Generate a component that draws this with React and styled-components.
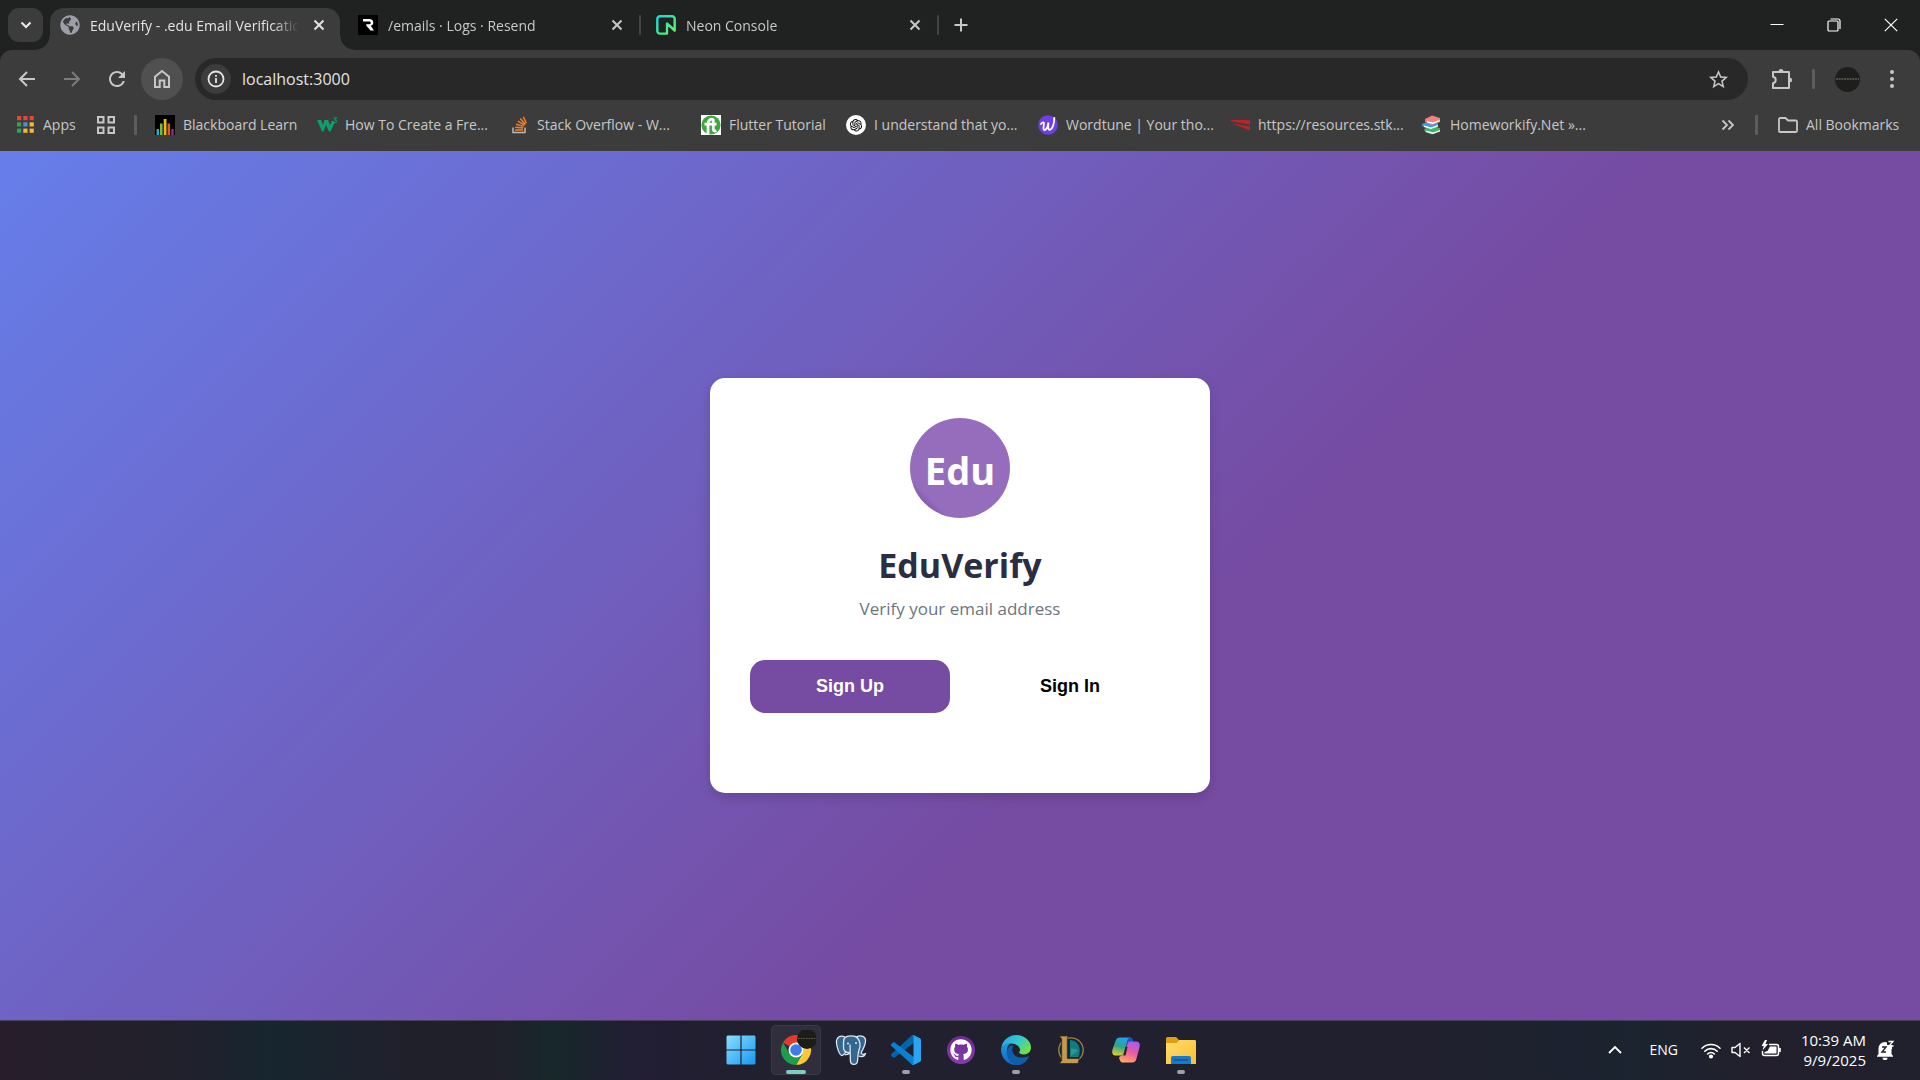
import React from 'react';
import styled, { createGlobalStyle, css } from 'styled-components';
import { FaGithub } from 'react-icons/fa6';
import { AiOutlineOpenAI } from 'react-icons/ai';
import { FaGlobeAmericas } from 'react-icons/fa';
import { MdStarOutline, MdRefresh } from 'react-icons/md';

const ui = '"Open Sans", "Noto Sans", sans-serif';

const GlobalStyle = createGlobalStyle`
  *, *::before, *::after { box-sizing: border-box; }
  body { margin: 0; background: #202121; font-family: ${ui}; }
  button { border: 0; padding: 0; background: none; color: inherit; font: inherit; }
  a { color: inherit; text-decoration: none; }
  svg { display: block; flex: none; }
`;

const Desktop = styled.div`
  display: flex;
  flex-direction: column;
  min-height: 100vh;
`;

/* ---------- Browser frame ---------- */

const TabStrip = styled.header`
  display: flex;
  align-items: flex-end;
  height: 50px;
  padding: 0 1px 0 8px;
  background: #202121;
  color: #c7c8c7;
`;

const TabSearch = styled.button`
  display: grid;
  place-items: center;
  width: 35px;
  height: 34px;
  margin: 0 2px 8px 0;
  border-radius: 11px;
  background: #3c3c3c;
  color: #e6e6e6;
`;

const Tabs = styled.nav`
  display: flex;
`;

const Tab = styled.div`
  position: relative;
  display: flex;
  align-items: center;
  gap: 10px;
  width: 298px;
  height: 42px;
  padding: 0 14px 8px 15px;
  ${(p) =>
    p.$active
      ? css`
          color: #e3e3e3;
          &::before {
            content: '';
            position: absolute;
            inset: 0 3px 0 5px;
            border-radius: 14px 14px 0 0;
            background: #3c3c3c;
          }
          &::after {
            content: '';
            position: absolute;
            bottom: 0;
            left: -9px;
            right: -11px;
            height: 14px;
            background: radial-gradient(circle at 0 0, transparent 13px, #3c3c3c 14px) left / 14px 14px no-repeat,
              radial-gradient(circle at 100% 0, transparent 13px, #3c3c3c 14px) right / 14px 14px no-repeat;
          }
          & > * {
            position: relative;
            z-index: 1;
          }
        `
      : css`
          &::after {
            content: '';
            position: absolute;
            top: 7px;
            right: 0;
            width: 2px;
            height: 20px;
            border-radius: 1px;
            background: #434444;
          }
        `}
`;

const TabTitle = styled.a`
  flex: 1;
  overflow: hidden;
  padding-top: 2px;
  white-space: nowrap;
  font-size: 14px;
  line-height: 20px;
  mask-image: linear-gradient(to right, #000 calc(100% - 26px), transparent);
`;

const TabClose = styled.button`
  display: grid;
  place-items: center;
  width: 20px;
  height: 20px;
`;

const NewTab = styled.button`
  display: grid;
  place-items: center;
  width: 34px;
  height: 34px;
  margin: 0 0 8px 5px;
`;

const WindowControls = styled.div`
  display: flex;
  align-self: flex-start;
  margin-left: auto;
  color: #fff;
`;

const WindowButton = styled.button`
  display: grid;
  place-items: center;
  width: 57px;
  height: 49px;
`;

const ToolbarBack = styled.div`
  background: #202121;
`;

const Toolbar = styled.div`
  display: flex;
  align-items: center;
  gap: 3px;
  height: 50px;
  padding: 8px 7px 0 6px;
  background: #3c3c3c;
  border-radius: 12px 12px 0 0;
  color: #c7c7c7;
`;

const ToolButton = styled.button`
  display: grid;
  place-items: center;
  width: 42px;
  height: 42px;
  border-radius: 50%;
  background: ${(p) => (p.$lit ? '#505050' : 'transparent')};
  color: ${(p) => (p.$dim ? '#7c7c7c' : 'inherit')};
`;

const AddressBar = styled.div`
  display: flex;
  align-items: center;
  flex: 1;
  gap: 11px;
  height: 42px;
  margin: 0 10px 0 9px;
  padding: 0 9px 0 6px;
  border-radius: 21px;
  background: #282828;
`;

const SiteInfo = styled.button`
  display: grid;
  place-items: center;
  width: 30px;
  height: 30px;
  border-radius: 50%;
  background: #3c3c3c;
  color: #e3e3e3;
`;

const Address = styled.input`
  flex: 1;
  min-width: 0;
  border: 0;
  padding: 0;
  outline: 0;
  background: none;
  color: #e3e3e3;
  font: 16px/24px ${ui};
`;

const Divider = styled.span`
  width: 3px;
  height: 20px;
  border-radius: 1px;
  background: #5d5d5d;
`;

const ToolDivider = styled(Divider)`
  margin: 0 8px 0 6px;
`;

const Avatar = styled.span`
  display: grid;
  place-items: center;
  width: 25px;
  height: 25px;
  border-radius: 50%;
  background: #1e1e1d;
`;

const Bookmarks = styled.nav`
  display: flex;
  align-items: center;
  gap: 18px;
  height: 51px;
  padding: 0 18px 1px 15px;
  background: #3c3c3c;
  color: #c7c7c7;
  font-size: 14px;
  line-height: 20px;
  white-space: nowrap;
`;

const Bookmark = styled.a`
  display: flex;
  align-items: center;
  gap: 8px;
`;

const BookmarkLabel = styled.span`
  width: ${(p) => p.$width}px;
`;

const BookmarksEnd = styled.div`
  display: flex;
  align-items: center;
  gap: 20px;
  margin-left: auto;
`;

/* ---------- Page ---------- */

const Page = styled.main`
  display: grid;
  place-items: center;
  flex: 1;
  padding: 20px;
  background: linear-gradient(135deg, #667eea 0%, #764ba2 60%);
`;

const Card = styled.section`
  display: flex;
  flex-direction: column;
  align-items: center;
  width: 100%;
  max-width: 500px;
  padding: 40px 40px 80px;
  border-radius: 15px;
  background: #fff;
  box-shadow: 0 4px 12px rgba(0, 0, 0, 0.15);
  text-align: center;
`;

const Logo = styled.div`
  display: grid;
  place-items: center;
  width: 100px;
  height: 100px;
  padding-top: 4px;
  border-radius: 50%;
  background: linear-gradient(45deg, #764ba2 10%, #966dbd 20%);
  color: #fff;
  font-size: 38px;
  font-weight: 700;
  line-height: 48px;
`;

const Title = styled.h1`
  margin: 23px 0 8px;
  color: #2b2d42;
  font-size: 34px;
  font-weight: 700;
  line-height: 48px;
`;

const Subtitle = styled.p`
  margin: 0 0 39px;
  color: #6c757d;
  font-size: 17px;
  line-height: 24px;
`;

const Actions = styled.div`
  display: flex;
  gap: 20px;
  width: 100%;
`;

const ActionButton = styled.button`
  flex: 1;
  height: 53px;
  border-radius: 15px;
  background: ${(p) => (p.$primary ? '#764ba2' : 'transparent')};
  color: ${(p) => (p.$primary ? '#fff' : '#000')};
  font: 700 18px/21px "Liberation Sans", Arial, sans-serif;
`;

/* ---------- Taskbar ---------- */

const Taskbar = styled.footer`
  display: grid;
  grid-template-columns: 1fr auto 1fr;
  align-items: center;
  height: 60px;
  padding-bottom: 1px;
  border-top: 1px solid #46405a;
  background: linear-gradient(
    to right,
    #271d2b 0%,
    #20212c 10%,
    #172630 14%,
    #20202b 21%,
    #20202b 26%,
    #17282b 29%,
    #221d33 33%,
    #20202e 40%,
    #20202e 75%,
    #1b2430 85%,
    #231f2c 92%,
    #20202c 100%
  );
  color: #fff;
`;

const Apps = styled.nav`
  grid-column: 2;
  display: flex;
  gap: 5px;
  padding-left: 1px;
`;

const AppButton = styled.button`
  position: relative;
  display: grid;
  place-items: center;
  width: 50px;
  height: 50px;
  border-radius: 5px;
  background: ${(p) => (p.$state === 'active' ? '#302e3c' : 'transparent')};
  box-shadow: ${(p) => (p.$state === 'active' ? 'inset 0 0 0 1px #3b3947' : 'none')};
  ${(p) =>
    p.$state &&
    css`
      &::after {
        content: '';
        position: absolute;
        bottom: 1px;
        left: 50%;
        width: ${p.$state === 'active' ? 20 : 8}px;
        height: 4px;
        border-radius: 2px;
        background: ${p.$state === 'active' ? '#7fcbc4' : '#a09fa8'};
        transform: translateX(-50%);
      }
    `}
`;

const Tray = styled.div`
  display: flex;
  align-items: center;
  justify-self: end;
  padding-right: 25px;
  font-size: 14px;
  line-height: 20px;
`;

const TrayButton = styled.button`
  display: flex;
  align-items: center;
  gap: 10px;
  height: 50px;
  margin-left: ${(p) => p.$gap || 0}px;
  text-align: right;
`;

const Clock = styled.time`
  font-size: 15px;
`;

/* ---------- Icons ---------- */

const Stroke = ({ size = 20, box = 20, w = 2, children, ...rest }) => (
  <svg width={size} height={size} viewBox={`0 0 ${box} ${box}`} fill="none" stroke="currentColor" strokeWidth={w} {...rest}>
    {children}
  </svg>
);

const CloseIcon = () => (
  <Stroke size={12} box={12}><path d="M1.5 1.5l9 9M10.5 1.5l-9 9" /></Stroke>
);

const ExtensionIcon = () => (
  <svg width="22" height="22" viewBox="0 0 22 22" fill="none" stroke="currentColor" strokeWidth="2" strokeLinejoin="round">
    <path d="M2 4h16v16H2v-4.800c3.600-.6 3.600-5.800 0-6.400z" />
    <path d="M7.500 3.500a2.500 2.500 0 0 1 5 0zM18.500 9.500a2.500 2.500 0 0 1 0 5z" fill="currentColor" stroke="none" />
  </svg>
);

const ResendIcon = () => (
  <svg width="20" height="20" viewBox="0 0 20 20">
    <rect width="20" height="20" fill="#000" />
    <path d="M5 4h6.4c2.300 0 3.900 1.300 3.900 3.500 0 1.700-1 2.900-2.600 3.300L16 15.500h-3.500L8.200 10.500V9.200h3c1 0 1.500-.5 1.500-1.300s-.5-1.300-1.500-1.300H5z" fill="#fff" />
  </svg>
);

const NeonIcon = () => (
  <svg width="20" height="20" viewBox="0 0 20 20" fill="none" strokeWidth="2.400" strokeLinejoin="round">
    <defs>
      <linearGradient id="neon" x1="0" y1="0" x2="1" y2="1">
        <stop offset="0" stopColor="#12d9e0" /><stop offset="1" stopColor="#62f655" />
      </linearGradient>
    </defs>
    <path d="M11 18.600H4A2.600 2.600 0 0 1 1.300 16V4A2.600 2.600 0 0 1 4 1.300h12A2.600 2.600 0 0 1 18.700 4v11.500L11 8.500z" stroke="url(#neon)" />
  </svg>
);

const AppsIcon = () => {
  const c = ['#e8453c', '#e8453c', '#e8453c', '#34a05a', '#4a90e2', '#f5b82e', '#34a05a', '#f5b82e', '#f5b82e'];
  return (
    <svg width="20" height="20" viewBox="0 0 20 20">
      {c.map((f, i) => <rect key={i} x={2 + (i % 3) * 6.3} y={1 + Math.floor(i / 3) * 6.3} width="4.2" height="4.2" fill={f} />)}
    </svg>
  );
};

const GridIcon = () => (
  <Stroke><rect x="2" y="2" width="5.500" height="5.500" /><rect x="12.500" y="2" width="5.500" height="5.500" /><rect x="2" y="12.500" width="5.500" height="5.500" /><rect x="12.500" y="12.500" width="5.500" height="5.500" /></Stroke>
);

const BlackboardIcon = () => (
  <svg width="20" height="20" viewBox="0 0 20 20">
    <rect width="20" height="20" fill="#000" />
    <path d="M1.500 14h2.500v6H1.500z" fill="#28a8e0" /><path d="M5 8.500h2.600V20H5z" fill="#7ab93c" />
    <path d="M8.700 4h2.800v16H8.700z" fill="#f2b51d" /><path d="M12.500 8.500h2.600V20h-2.600z" fill="#e2592b" />
    <path d="M16.200 14h2.500v6h-2.500z" fill="#8a2f93" />
  </svg>
);

const W3Icon = () => (
  <svg width="20" height="20" viewBox="0 0 20 20">
    <path d="M0 5h4l2 5 1.500-5H11l2 5 1.800-4H17l.5 2-4 8.500h-1.500L9 10l-2.500 6.500H5z" fill="#0d9e6b" />
    <path d="M16.500 3h3l-1.600 1.900c2.200.1 2 3-.2 2.800l-1.200-.5" fill="none" stroke="#0d9e6b" strokeWidth="1.100" />
  </svg>
);

const StackOverflowIcon = () => (
  <svg width="20" height="20" viewBox="0 0 20 20" fill="none">
    <path d="M4 12.500V17.500h12V12.500" stroke="#bcbbbb" strokeWidth="1.500" />
    <path d="M6 15h8M6.200 12.200l8 .9M7.100 9.200l7.600 2.200M8.900 6.200l6.700 4M11.300 3.600l5 5.900M14.300 1.800l3 6.500" stroke="#f48024" strokeWidth="1.500" />
  </svg>
);

const FlutterTutorialIcon = () => (
  <svg width="20" height="20" viewBox="0 0 20 20">
    <rect width="20" height="20" fill="#fff" /><circle cx="10" cy="10" r="9.600" fill="#3da63f" />
    <path d="M7 19V9c0-4 2.500-5.500 5.500-4.500M3.500 9.200h12M12.300 4v10.500c0 1.700 1.300 2 3 1" fill="none" stroke="#fff" strokeWidth="2.800" />
  </svg>
);

const OpenAIBadge = styled.span`
  display: grid;
  place-items: center;
  width: 20px;
  height: 20px;
  border-radius: 50%;
  background: #fff;
  color: #111;
`;

const WordtuneIcon = () => (
  <svg width="20" height="20" viewBox="0 0 20 20">
    <circle cx="10" cy="10" r="9.800" fill="#6f3fe4" />
    <path d="M3 9c1.500-2.200 3.200-2.200 2.900 0-.2 2.500-1.200 6 .6 6 2 0 3.400-4.200 4-7.500-.5 3.300-.6 7.500 1.300 7.300 2.600-.3 4.600-6.500 4.500-12" fill="none" stroke="#fff" strokeWidth="1.800" strokeLinecap="round" />
  </svg>
);

const RedWingIcon = () => (
  <svg width="20" height="20" viewBox="0 0 20 20" fill="#b8242b"><path d="M0 5h20v4.500L2 6.500zM1 8l19 3.500v4z" /></svg>
);

const BooksIcon = () => (
  <svg width="20" height="20" viewBox="0 0 20 20">
    <path d="M2 14l8-3 8 2v3l-8 3.500-7-2.500z" fill="#3fb55b" /><path d="M4 15.500l7 2 7-2.500v1.500L11 19l-7-2z" fill="#fff" />
    <path d="M0 9l8-3 8 2.500v3L8 14l-7.500-2.500z" fill="#3d9fe0" /><path d="M2 10.500l7 2 7-2.500v1.500L9 14l-7-2z" fill="#fff" />
    <path d="M3 4l7-3.500 8 2.500v4L10 10 3 7z" fill="#f0837c" /><path d="M5 6l5.500 1.500L17.500 5v1.500l-7 2.500L5 7.500z" fill="#fff" />
  </svg>
);

const WindowsIcon = () => (
  <svg width="30" height="30" viewBox="0 0 30 30">
    <defs><linearGradient id="win" gradientUnits="userSpaceOnUse" x1="0" y1="0" x2="30" y2="30"><stop offset="0" stopColor="#8be0ff" /><stop offset="1" stopColor="#1597f2" /></linearGradient></defs>
    <path d="M1.500.5h12.900v14H.5v-13zM15.600.5h12.900l1 1v13H15.600zM.5 15.600h13.900v13.900H1.500l-1-1zM15.600 15.600h13.900v12.900l-1 1H15.600z" fill="url(#win)" />
  </svg>
);

const ChromeIcon = () => (
  <svg width="40" height="40" viewBox="0 0 40 40">
    <path d="M20 20L7 12.500A15 15 0 0 1 33 12.500H20z" fill="#e33b2e" />
    <path d="M20 12.500H33A15 15 0 0 1 20 35L26.500 23.750z" fill="#fcc934" />
    <path d="M7 12.500L13.500 23.750 20 27.500 26.500 23.750 20 35A15 15 0 0 1 7 12.500z" fill="#1e9e4a" />
    <circle cx="20" cy="20" r="7.500" fill="#fff" /><circle cx="20" cy="20" r="5.800" fill="#3b7ded" />
    <circle cx="31" cy="9" r="10" fill="#1c1c19" /><path d="M22 8.500h18" stroke="#55523a" strokeDasharray="2 .6" />
  </svg>
);

const PostgresIcon = () => (
  <svg width="32" height="32" viewBox="0 0 32 32" stroke="#dfe7ee" strokeWidth="1.300" fill="#336791" strokeLinejoin="round">
    <path d="M10 3C5 .6 1 3.500 1.500 9c.5 5 3 12.500 5.500 12.500 1.500 0 2.500-2 4-3.500" />
    <path d="M21 3c5-2.500 10-.5 9.500 4.500-.4 4-2.500 8-4.500 11.500 1 1.500 3 1.500 4.500.5-1 3-4 3.500-7 2.500" />
    <path d="M9.500 4C12 1.500 20 1 22.500 4c2.500 3 3 8 1.500 12-1.500 4.500-1 8-1.500 11-.5 4.500-6.500 4.500-7 .5-.4-3 0-6-.5-8.500-5 0-7-3-6.500-7C8.800 9 8 6 9.500 4z" />
    <path d="M12 9.500h2M20 9h2M15 19c-2 1.500-4 2-5.500 1.500M14.800 19c1-2-.2-5.500.4-8.500" fill="none" />
  </svg>
);

const VSCodeIcon = () => (
  <svg width="30" height="30" viewBox="0 0 100 100">
    <path d="M96.460 10.800L75.860.880C73.470-.270 70.620.210 68.750 2.080L1.300 63.580c-1.820 1.660-1.810 4.510 0 6.160l5.510 5.010c1.490 1.350 3.720 1.450 5.320.240L93.360 13.370C96.090 11.300 100 13.250 100 16.670v-.240c0-2.400-1.370-4.590-3.540-5.630z" fill="#0065a9" />
    <path d="M96.460 89.200l-20.600 9.920c-2.390 1.150-5.240.660-7.110-1.210L1.300 36.420c-1.820-1.660-1.810-4.510 0-6.170l5.510-5c1.490-1.350 3.720-1.450 5.320-.240l81.230 61.620c2.730 2.070 6.640.120 6.640-3.300v.240c0 2.400-1.370 4.590-3.540 5.630z" fill="#0a80d2" />
    <path d="M75.860 99.130c-2.390 1.150-5.240.660-7.110-1.210 2.310 2.310 6.250.670 6.250-2.590V4.670C75 1.410 71.060-.220 68.750 2.080 70.620.210 73.470-.270 75.860.870l20.600 9.910C98.620 11.820 100 14.010 100 16.410v67.180c0 2.400-1.380 4.590-3.540 5.630z" fill="#2ba4f2" />
  </svg>
);

const GitHubBadge = styled.span`
  display: grid;
  place-items: center;
  width: 28px;
  height: 28px;
  border-radius: 50%;
  background: linear-gradient(#6a2c8e, #8a3bb0);
  color: #fff;
`;

const EdgeIcon = () => (
  <svg width="30" height="30" viewBox="0 0 30 30">
    <defs>
      <linearGradient id="e1" x1="0" y1="0" x2="1" y2=".6"><stop offset="0" stopColor="#259fe0" /><stop offset=".5" stopColor="#30c5d8" /><stop offset="1" stopColor="#6fe04a" /></linearGradient>
      <linearGradient id="e2" x1="0" y1="0" x2="0" y2="1"><stop offset="0" stopColor="#1f9ce0" /><stop offset="1" stopColor="#1265c0" /></linearGradient>
    </defs>
    <path d="M.2 13C1.500 5.500 7.500 0 15 0c8.500 0 15 6 15 12.500 0 4-3 7-7 7-3.500 0-5.200-1.200-4.800-2.300.7-1 1-2 .8-3C18 10 13 8 9 8.500 5.500 9 2 10.500.2 13z" fill="url(#e1)" />
    <path d="M.2 13C2 9.500 6 7.500 10 8c-3 1.500-4.500 5-4 9 .5 5 4 10 10 12.900C6.500 30.500-1 22.500.2 13z" fill="url(#e2)" />
    <path d="M12.500 10.500C10.500 13.500 11 19 14.500 21c4 2.300 8 2 13.500 0C25.500 27.500 20.500 30.500 15.500 30 8.500 28.500 5 21 6 15.500c.8-3.500 3.500-5.500 6.500-5z" fill="#0f5ea8" />
  </svg>
);

const LeagueIcon = () => (
  <svg width="30" height="30" viewBox="0 0 30 30">
    <circle cx="15" cy="15" r="12.200" fill="#0b2b3a" stroke="#a8823c" strokeWidth="1.300" />
    <path d="M14 5c8 .5 12 8 8.500 17H14z" fill="#137a80" /><path d="M15 14c3-1 6 0 7 2l-7 5z" fill="#3ba7a0" opacity=".6" />
    <path d="M3.500 1h8.800l-1 2.500v20h12L22 28.500H3.500l2.200-3V4z" fill="#c39a50" stroke="#3a2b14" strokeWidth=".8" />
  </svg>
);

const CopilotIcon = () => (
  <svg width="30" height="30" viewBox="0 0 30 30">
    <defs>
      <linearGradient id="c1" x1=".5" y1="0" x2=".2" y2="1"><stop offset="0" stopColor="#1ba4ee" /><stop offset=".5" stopColor="#35a38a" /><stop offset="1" stopColor="#e5cf2d" /></linearGradient>
      <linearGradient id="c2" x1=".6" y1="0" x2=".3" y2="1"><stop offset="0" stopColor="#a45cf0" /><stop offset=".5" stopColor="#ee5b9b" /><stop offset="1" stopColor="#ffab63" /></linearGradient>
    </defs>
    <path d="M9 2.500h9.500c2 0 3 1.500 3.500 4h-3c-2 0-3 1-3.500 3L13 17.500c-.5 2-1.500 3-3.500 3H5c-3 0-4.500-2-3.500-6L4.500 6C5.300 3.500 6.500 2.500 9 2.500z" fill="url(#c1)" />
    <path d="M18.500 2.500c2 0 3 1.500 3.500 4h-5l-1.500 2 1-4z" fill="#1b4fc9" />
    <path d="M21 27.500h-9c-2.500 0-3-1.500-4-5l2-2c2-.1 3-1 3.500-3L16 10c.5-2.500 1.500-3.500 3.500-3.500H25c3 0 4.500 2 3.500 6l-3 11c-.8 3-2 4-4.500 4z" fill="url(#c2)" />
    <path d="M16.500 12h-2l-2 8.500h2z" fill="#20202e" />
  </svg>
);

const FolderIcon = () => (
  <svg width="30" height="30" viewBox="0 0 30 30">
    <defs><linearGradient id="f1" x1="0" y1="0" x2="1" y2="1"><stop offset="0" stopColor="#ffdd6d" /><stop offset="1" stopColor="#f8bf32" /></linearGradient></defs>
    <path d="M0 3.500A1.500 1.500 0 0 1 1.500 2H10l3 3h15.500A1.500 1.500 0 0 1 30 6.500V15H0z" fill="#dc9f13" />
    <path d="M0 8h10.500l3-3h15A1.500 1.500 0 0 1 30 6.500V29H0z" fill="url(#f1)" />
    <path d="M5 29v-6a2 2 0 0 1 2-2h16a2 2 0 0 1 2 2v6z" fill="#1a78c8" /><path d="M8.500 25h13" stroke="#0c559b" strokeWidth="1.500" strokeLinecap="round" />
  </svg>
);

const WifiIcon = () => (
  <Stroke size={20} w={1.6} strokeLinecap="round">
    <path d="M1 8.200a12.800 12.800 0 0 1 18 0M3.800 11.200a8.800 8.800 0 0 1 12.400 0M6.600 14a4.900 4.900 0 0 1 6.800 0" /><circle cx="10" cy="16.500" r="1.300" fill="currentColor" />
  </Stroke>
);

const MuteIcon = () => (
  <Stroke size={20} w={1.4} strokeLinejoin="round"><path d="M1 7.500h3l5-4v13l-5-4H1zM13 7.500l5.500 5.500M18.500 7.500L13 13" /></Stroke>
);

const BatteryIcon = () => (
  <svg width="20" height="20" viewBox="0 0 20 20" fill="none" stroke="currentColor" strokeWidth="1.500">
    <path d="M8 4.500h7.500a2 2 0 0 1 2 2v7a2 2 0 0 1-2 2h-12a2 2 0 0 1-2-2V11" /><path d="M9 6.500h6.500v7h-12V12l3-1z" fill="currentColor" stroke="none" />
    <path d="M18.800 8v4" strokeWidth="2" /><path d="M4 0L.5 6h2.300L1.500 10.500 7 4H4.500L6 0z" fill="currentColor" stroke="none" />
  </svg>
);

const BellIcon = () => (
  <svg width="19" height="20" viewBox="0 0 19 20">
    <path d="M2.500 14V9a6.500 6.500 0 0 1 6.500-7l2 .5V5h5v4l-.5.500V14l1.500 2v.8H1V16zM6.500 17.700h5a2.500 2.500 0 0 1-5 0z" fill="#fff" />
    <path d="M12.500 1.500h4.500l-4 4.500h4.500" fill="none" stroke="#fff" strokeWidth="1.300" /><path d="M6 7h4l-4 5h4" fill="none" stroke="#20202c" strokeWidth="1.400" />
  </svg>
);

/* ---------- Data ---------- */

const tabs = [
  { title: 'EduVerify - .edu Email Verification', icon: <FaGlobeAmericas size={20} color="#9aa0a6" />, active: true },
  { title: '/emails · Logs · Resend', icon: <ResendIcon /> },
  { title: 'Neon Console', icon: <NeonIcon /> },
];

const bookmarks = [
  { label: 'Blackboard Learn', icon: <BlackboardIcon />, width: 116 },
  { label: 'How To Create a Fre...', icon: <W3Icon />, width: 146 },
  { label: 'Stack Overflow - W...', icon: <StackOverflowIcon />, width: 146 },
  { label: 'Flutter Tutorial', icon: <FlutterTutorialIcon />, width: 99 },
  { label: 'I understand that yo...', icon: <OpenAIBadge><AiOutlineOpenAI size={16} /></OpenAIBadge>, width: 146 },
  { label: 'Wordtune | Your tho...', icon: <WordtuneIcon />, width: 146 },
  { label: 'https://resources.stk...', icon: <RedWingIcon />, width: 146 },
  { label: 'Homeworkify.Net »...', icon: <BooksIcon />, width: 146 },
];

const apps = [
  { name: 'Start', icon: <WindowsIcon /> },
  { name: 'Google Chrome', icon: <ChromeIcon />, state: 'active' },
  { name: 'PostgreSQL', icon: <PostgresIcon /> },
  { name: 'Visual Studio Code', icon: <VSCodeIcon />, state: 'open' },
  { name: 'GitHub Desktop', icon: <GitHubBadge><FaGithub size={22} /></GitHubBadge> },
  { name: 'Microsoft Edge', icon: <EdgeIcon />, state: 'open' },
  { name: 'League of Legends', icon: <LeagueIcon /> },
  { name: 'Copilot', icon: <CopilotIcon /> },
  { name: 'File Explorer', icon: <FolderIcon />, state: 'open' },
];

export default function App() {
  return (
    <Desktop>
      <GlobalStyle />
      <TabStrip>
        <TabSearch aria-label="Search tabs">
          <Stroke size={12} box={12} w={2.2}><path d="M1.500 3.500L6 8l4.500-4.500" /></Stroke>
        </TabSearch>
        <Tabs>
          {tabs.map((t) => (
            <Tab key={t.title} $active={t.active}>
              {t.icon}
              <TabTitle href="#">{t.title}</TabTitle>
              <TabClose aria-label={`Close ${t.title}`}><CloseIcon /></TabClose>
            </Tab>
          ))}
        </Tabs>
        <NewTab aria-label="New tab"><Stroke size={14} box={14} w={2}><path d="M7 .5v13M.5 7h13" /></Stroke></NewTab>
        <WindowControls>
          <WindowButton aria-label="Minimize"><Stroke size={14} box={14} w={1}><path d="M.5 6.500h13" /></Stroke></WindowButton>
          <WindowButton aria-label="Restore">
            <Stroke size={14} box={14} w={1.2}><rect x="1" y="3" width="10" height="10" rx="1" /><path d="M3.500 1h7.500a2 2 0 0 1 2 2v8" /></Stroke>
          </WindowButton>
          <WindowButton aria-label="Close"><Stroke size={14} box={14} w={1.2}><path d="M.8.8l12.400 12.400M13.200.8L.8 13.200" /></Stroke></WindowButton>
        </WindowControls>
      </TabStrip>

      <ToolbarBack>
        <Toolbar>
          <ToolButton aria-label="Back"><Stroke><path d="M18 10H3.500M10 3l-7 7 7 7" /></Stroke></ToolButton>
          <ToolButton aria-label="Forward" $dim><Stroke><path d="M2 10h14.500M10 3l7 7-7 7" /></Stroke></ToolButton>
          <ToolButton aria-label="Reload"><MdRefresh size={24} /></ToolButton>
          <ToolButton aria-label="Home" $lit>
            <Stroke><path d="M3 18V7.800L10 2l7 5.800V18h-4.700v-6.500H7.700V18z" /></Stroke>
          </ToolButton>
          <AddressBar>
            <SiteInfo aria-label="Site information">
              <Stroke size={18} box={18} w={1.8}><circle cx="9" cy="9" r="7.500" /><path d="M9 8v5M9 5v1.800" /></Stroke>
            </SiteInfo>
            <Address aria-label="Address" defaultValue="localhost:3000" />
            <ToolButton aria-label="Bookmark this page"><MdStarOutline size={23} /></ToolButton>
          </AddressBar>
          <ToolButton aria-label="Extensions"><ExtensionIcon /></ToolButton>
          <ToolDivider />
          <ToolButton aria-label="Profile">
            <Avatar><svg width="23" height="4" viewBox="0 0 23 4"><path d="M0 2h23" stroke="#5d6450" strokeWidth="1.500" strokeDasharray="2 .7" /></svg></Avatar>
          </ToolButton>
          <ToolButton aria-label="Menu">
            <svg width="20" height="20" viewBox="0 0 20 20" fill="currentColor"><circle cx="10" cy="3" r="2" /><circle cx="10" cy="10" r="2" /><circle cx="10" cy="17" r="2" /></svg>
          </ToolButton>
        </Toolbar>
      </ToolbarBack>

      <Bookmarks>
        <Bookmark href="#"><AppsIcon /><BookmarkLabel $width={35}>Apps</BookmarkLabel></Bookmark>
        <GridIcon />
        <Divider />
        {bookmarks.map((b) => (
          <Bookmark key={b.label} href="#">{b.icon}<BookmarkLabel $width={b.width}>{b.label}</BookmarkLabel></Bookmark>
        ))}
        <BookmarksEnd>
          <Stroke size={14} box={14} w={1.8}><path d="M1.500 2.500L6 7l-4.500 4.500M7.500 2.500L12 7l-4.500 4.500" /></Stroke>
          <Divider />
          <Bookmark href="#">
            <Stroke w={1.8}><path d="M1 16V4.200c0-.7.500-1.200 1.200-1.200h5.300l2.500 2.500h7.800c.7 0 1.200.5 1.200 1.200v9.100c0 .7-.5 1.200-1.200 1.200H2.200C1.500 17 1 16.700 1 16z" /></Stroke>
            <BookmarkLabel $width={96}>All Bookmarks</BookmarkLabel>
          </Bookmark>
        </BookmarksEnd>
      </Bookmarks>

      <Page>
        <Card>
          <Logo>Edu</Logo>
          <Title>EduVerify</Title>
          <Subtitle>Verify your email address</Subtitle>
          <Actions>
            <ActionButton $primary>Sign Up</ActionButton>
            <ActionButton>Sign In</ActionButton>
          </Actions>
        </Card>
      </Page>

      <Taskbar>
        <Apps>
          {apps.map((a) => (
            <AppButton key={a.name} aria-label={a.name} $state={a.state}>{a.icon}</AppButton>
          ))}
        </Apps>
        <Tray>
          <TrayButton aria-label="Show hidden icons"><Stroke size={14} box={14} w={1.8}><path d="M1 10l6-6 6 6" /></Stroke></TrayButton>
          <TrayButton $gap={27}>ENG</TrayButton>
          <TrayButton $gap={23} aria-label="Network, sound and battery"><WifiIcon /><MuteIcon /><BatteryIcon /></TrayButton>
          <TrayButton $gap={20}><Clock>10:39 AM<br />9/9/2025</Clock><BellIcon /></TrayButton>
        </Tray>
      </Taskbar>
    </Desktop>
  );
}
